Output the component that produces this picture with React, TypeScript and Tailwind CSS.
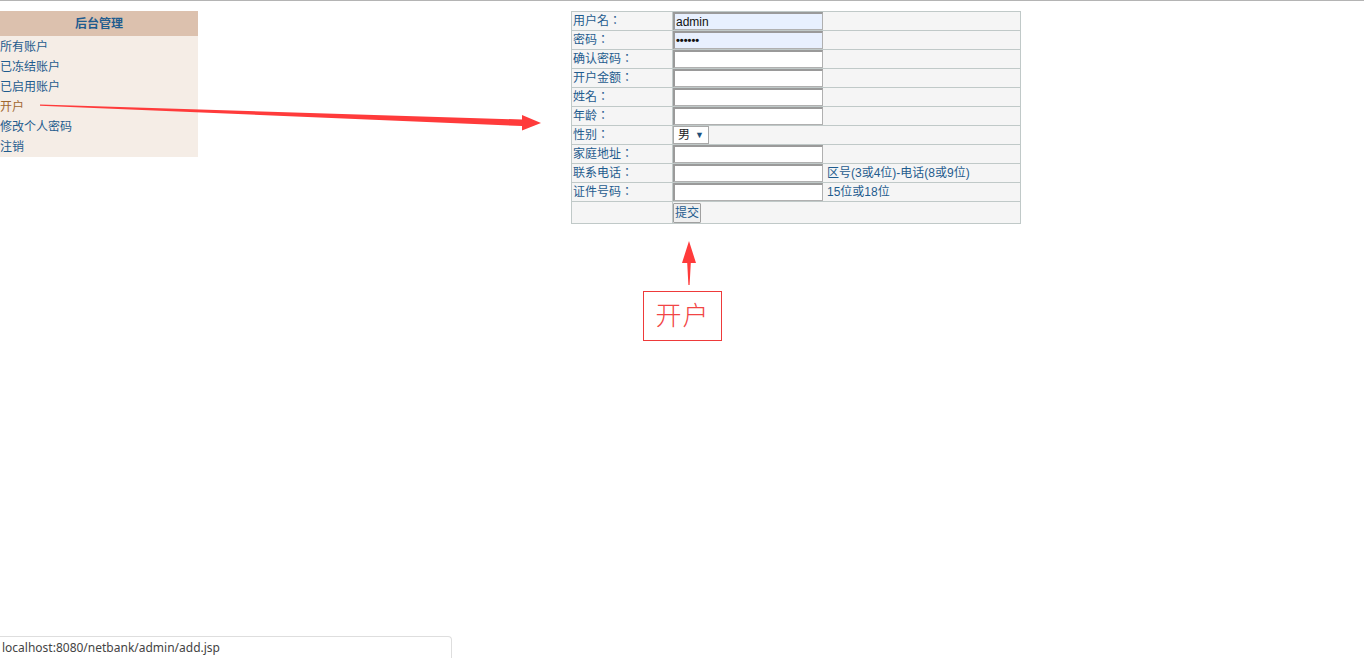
import React from "react";

const F = { fontFamily: '"Liberation Sans", "Noto Sans CJK TC", sans-serif' };

const rows: { label: string; kind: string; value?: string; hint?: string }[] = [
  { label: "用户名", kind: "auto", value: "admin" },
  { label: "密码", kind: "autopw", value: "••••••" },
  { label: "确认密码", kind: "input" },
  { label: "开户金额", kind: "input" },
  { label: "姓名", kind: "input" },
  { label: "年龄", kind: "input" },
  { label: "性别", kind: "select" },
  { label: "家庭地址", kind: "input" },
  { label: "联系电话", kind: "input", hint: "区号(3或4位)-电话(8或9位)" },
  { label: "证件号码", kind: "input", hint: "15位或18位" },
];

function Field({ kind, value }: { kind: string; value?: string }) {
  if (kind === "select") {
    return (
      <div className="h-[18px] w-[36px] border border-[#a9a9a9] bg-white flex items-center pl-[4px] text-[12px] text-[#222] leading-none">
        男<span className="ml-[5px] text-[9px] text-[#1f4f7a]">▼</span>
      </div>
    );
  }
  const auto = kind === "auto" || kind === "autopw";
  return (
    <div
      className={`h-[18px] w-[150px] border border-[#b0b0b0] border-t-2 border-l-2 border-t-[#9a9a9a] border-l-[#9a9a9a] flex items-center pl-[1px] text-[12px] leading-none text-[#111] ${
        auto ? "bg-[#e8f0fe]" : "bg-white"
      }`}
    >
      {kind === "autopw" ? <span className="text-[11px] font-bold">{value}</span> : value}
    </div>
  );
}

export default function App() {
  return (
    <div className="relative w-[1364px] h-[658px] bg-white border-t border-[#b4b4b4] overflow-hidden" style={F}>
      <div className="flex items-start pt-[10px]">
        {/* sidebar */}
        <div className="w-[198px] text-[12px] text-[#1f5c8e]">
          <div className="h-[25px] bg-[#dcc1ae] flex items-center justify-center font-bold">后台管理</div>
          <div className="bg-[#f5ede6] pt-[1px]">
            <div className="h-[20px] flex items-center">所有账户</div>
            <div className="h-[20px] flex items-center">已冻结账户</div>
            <div className="h-[20px] flex items-center">已启用账户</div>
            <div className="h-[20px] flex items-center text-[#a2682f]">开户</div>
            <div className="h-[20px] flex items-center">修改个人密码</div>
            <div className="h-[20px] flex items-center">注销</div>
          </div>
        </div>

        {/* form table */}
        <div className="ml-[373px] w-[450px] border-t border-l border-r border-[#c0c9c8] bg-[#f5f5f5] text-[12px] text-[#1f5c8e]">
          {rows.map((r) => (
            <div key={r.label} className="flex h-[19px] border-b border-[#c0c9c8]">
              <div className="w-[101px] border-r border-[#c0c9c8] flex items-center pl-[1px]">
                {r.label}
                <span className="inline-block w-[12px] text-center">：</span>
              </div>
              <div className="flex items-center">
                <Field kind={r.kind} value={r.value} />
                {r.hint && <span className="ml-[4px]">{r.hint}</span>}
              </div>
            </div>
          ))}
          <div className="flex h-[22px] border-b border-[#c0c9c8]">
            <div className="w-[101px] border-r border-[#c0c9c8]"></div>
            <div className="flex items-center">
              <button className="h-[20px] px-[1px] border border-[#a0a0a0] bg-[#efefef] text-[12px] text-[#1f5c8e] leading-none rounded-[1px]">
                提交
              </button>
            </div>
          </div>
        </div>
      </div>

      {/* annotation arrows */}
      <svg className="absolute left-0 top-0 pointer-events-none" width="1364" height="658">
        <polygon points="40,103.5 522,118.5 522,114 541,122 522,129.5 522,125 40,104.8" fill="#ff3b3b" />
        <polygon points="689,240 696,262 690.8,262 689.6,284 688.4,284 687.2,262 682,262" fill="#ff3b3b" />
      </svg>

      <div className="absolute left-[643px] top-[290px] w-[79px] h-[50px] border border-[#ee3a3a] flex items-center justify-center text-[26px] text-[#f24545] font-light tracking-[1px]">
        开户
      </div>

      {/* status bar */}
      <div
        className="absolute left-0 bottom-0 w-[452px] h-[22px] bg-white border-t border-r border-[#dedede] rounded-tr-[4px] flex items-center pl-[2px] text-[12px] text-[#444]"
        style={{ fontFamily: '"Noto Sans", "Open Sans", sans-serif' }}
      >
        localhost:8080/netbank/admin/add.jsp
      </div>
    </div>
  );
}
